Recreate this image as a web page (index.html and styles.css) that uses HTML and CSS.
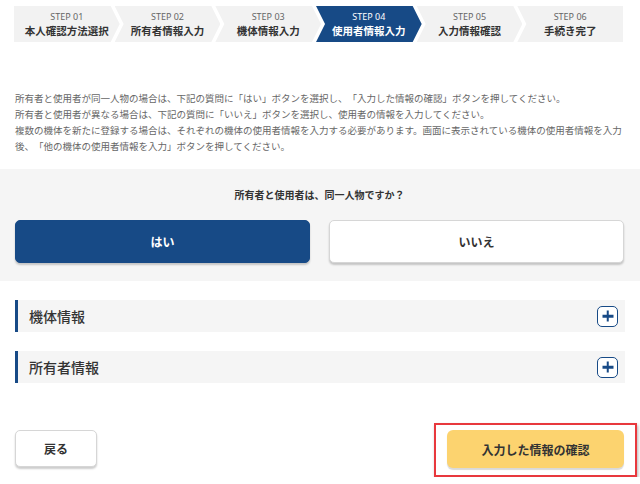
FILE: index.html
```html
<!DOCTYPE html>
<html lang="ja">
<head>
  <meta charset="UTF-8">
  <meta name="viewport" content="width=device-width, initial-scale=1">
  <title>使用者情報入力</title>
  <link rel="stylesheet" href="styles.css">
</head>
<body>
  <ol class="steps">
    <li class="step first"><span class="step-no">STEP 01</span><span class="step-name">本人確認方法選択</span></li>
    <li class="step"><span class="step-no">STEP 02</span><span class="step-name">所有者情報入力</span></li>
    <li class="step"><span class="step-no">STEP 03</span><span class="step-name">機体情報入力</span></li>
    <li class="step active"><span class="step-no">STEP 04</span><span class="step-name">使用者情報入力</span></li>
    <li class="step"><span class="step-no">STEP 05</span><span class="step-name">入力情報確認</span></li>
    <li class="step last"><span class="step-no">STEP 06</span><span class="step-name">手続き完了</span></li>
  </ol>

  <p class="lead">
    所有者と使用者が同一人物の場合は、下記の質問に「はい」ボタンを選択し、「入力した情報の確認」ボタンを押してください。<br>
    所有者と使用者が異なる場合は、下記の質問に「いいえ」ボタンを選択し、使用者の情報を入力してください。<br>
    複数の機体を新たに登録する場合は、それぞれの機体の使用者情報を入力する必要があります。画面に表示されている機体の使用者情報を入力後、「他の機体の使用者情報を入力」ボタンを押してください。
  </p>

  <section class="question">
    <p class="question-text">所有者と使用者は、同一人物ですか？</p>
    <div class="choices">
      <button type="button" class="choice selected">はい</button>
      <button type="button" class="choice">いいえ</button>
    </div>
  </section>

  <div class="accordion">
    <div class="acc-row">
      <span class="acc-title">機体情報</span>
      <span class="acc-toggle"></span>
    </div>
    <div class="acc-row">
      <span class="acc-title">所有者情報</span>
      <span class="acc-toggle"></span>
    </div>
  </div>

  <div class="actions">
    <button type="button" class="btn-back">戻る</button>
    <div class="highlight">
      <button type="button" class="btn-confirm">入力した情報の確認</button>
    </div>
  </div>
</body>
</html>
```

FILE: styles.css
```css
body {
  margin: 0;
  width: 640px;
  font-family: "Noto Sans CJK JP", "Noto Sans", sans-serif;
  color: #333;
  background: #fff;
  text-spacing-trim: space-all;
}
button {
  font-family: inherit;
  cursor: pointer;
}

/* steps */
.steps {
  list-style: none;
  margin: 6px 0 0;
  padding: 0 17px 0 14px;
  display: flex;
  height: 36px;
}
.step {
  flex: 1;
  display: flex;
  flex-direction: column;
  align-items: center;
  justify-content: center;
  background: #f2f2f2;
  margin-left: -5px;
  clip-path: polygon(0 0, calc(100% - 9px) 0, 100% 50%, calc(100% - 9px) 100%, 0 100%, 9px 50%);
}
.step.first {
  margin-left: 0;
  clip-path: polygon(0 0, calc(100% - 9px) 0, 100% 50%, calc(100% - 9px) 100%, 0 100%);
}
.step.last {
  clip-path: polygon(0 0, 100% 0, 100% 100%, 0 100%, 9px 50%);
}
.step-no {
  font-family: "Noto Sans", sans-serif;
  font-size: 9px;
  line-height: 12px;
  color: #666;
}
.step-name {
  font-size: 10.5px;
  line-height: 15px;
  font-weight: 700;
  color: #333;
}
.step.active {
  background: #174a86;
}
.step.active .step-no,
.step.active .step-name {
  color: #fff;
}

/* lead text */
.lead {
  margin: 48px 0 0;
  padding: 0 15px;
  font-size: 9.5px;
  line-height: 16px;
  color: #666;
}

/* question */
.question {
  margin-top: 15px;
  background: #f5f5f5;
  padding: 18px 16px 18px 15px;
}
.question-text {
  margin: 0 0 17px;
  text-align: center;
  font-size: 10px;
  line-height: 16px;
  font-weight: 700;
  color: #333;
}
.choices {
  display: flex;
  gap: 19px;
}
.choice {
  flex: 1;
  height: 43px;
  border-radius: 5px;
  border: 1px solid #d6d6d6;
  background: #fff;
  box-shadow: 0 2px 2px rgba(0,0,0,0.2);
  font-size: 12px;
  font-weight: 700;
  color: #333;
}
.choice.selected {
  background: #174a86;
  border-color: #174a86;
  color: #fff;
}

/* accordion */
.accordion {
  margin-top: 19px;
  padding: 0 15px;
  display: flex;
  flex-direction: column;
  gap: 19px;
}
.acc-row {
  height: 32px;
  display: flex;
  align-items: center;
  justify-content: space-between;
  background: #f5f5f5;
  border-left: 3px solid #174a86;
  padding: 0 7px 0 11px;
}
.acc-title {
  font-size: 14px;
  font-weight: 500;
  color: #333;
}
.acc-toggle {
  width: 19px;
  height: 19px;
  border: 1.5px solid #174a86;
  border-radius: 5px;
  background: #fff;
  position: relative;
}
.acc-toggle::before,
.acc-toggle::after {
  content: "";
  position: absolute;
  background: #174a86;
  left: 50%;
  top: 50%;
  transform: translate(-50%, -50%);
}
.acc-toggle::before { width: 11px; height: 2.5px; }
.acc-toggle::after { width: 2.5px; height: 11px; }

/* actions */
.actions {
  margin-top: 40px;
  padding: 0 3px 0 15px;
  display: flex;
  justify-content: space-between;
  align-items: flex-start;
}
.btn-back {
  margin-top: 7px;
  width: 82px;
  height: 37px;
  border: 1px solid #d6d6d6;
  border-radius: 5px;
  background: #fff;
  box-shadow: 0 2px 2px rgba(0,0,0,0.2);
  font-size: 12px;
  font-weight: 700;
  color: #333;
}
.highlight {
  border: 2px solid #e8383d;
  padding: 5px 11px 7px;
  box-shadow: 1px 2px 3px rgba(0,0,0,0.3);
}
.btn-confirm {
  display: block;
  width: 177px;
  height: 38px;
  border: none;
  border-radius: 6px;
  background: #fcd36f;
  box-shadow: 0 2px 1px rgba(0,0,0,0.15);
  font-size: 12px;
  font-weight: 700;
  color: #333;
}
```
